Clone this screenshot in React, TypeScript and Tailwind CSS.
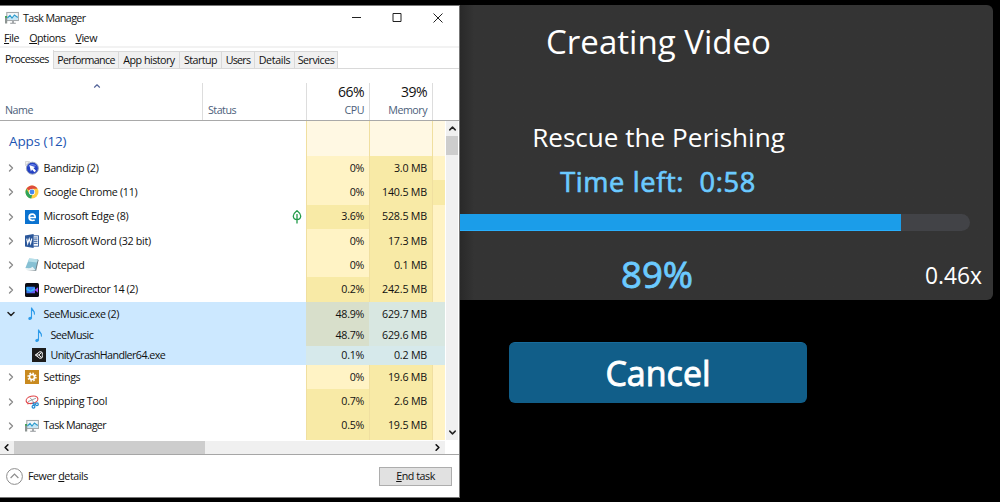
import React from 'react';
import clsx from 'clsx';
import { ChevronDown, ChevronLeft, ChevronRight, ChevronUp } from 'lucide-react';

type Heat = 'low' | 'high' | 'selStrong' | 'selMem' | 'selWeak';

interface Process {
  name: string;
  icon: React.FC;
  cpu: string;
  memory: string;
  cpuHeat: Heat;
  memHeat: Heat;
  restHeat: Heat;
  tracking: string;
  kind?: 'parent' | 'child';
  leaf?: boolean;
}

const heatClass: Record<Heat, string> = {
  low: 'bg-[#fff3c5]',
  high: 'bg-[#f8eaa6]',
  selStrong: 'bg-[#d8dfcb]',
  selMem: 'bg-[#d8e7e1]',
  selWeak: 'bg-[#d6e9eb]',
};

const TaskManagerIcon: React.FC = () => (
  <svg viewBox="0 0 14 14" className="w-3.5 h-3.5 shrink-0">
    <rect x="1.8" y="1.5" width="11.6" height="8" fill="#f4f8fa" stroke="#a3a8ab" strokeWidth="1.1" />
    <path d="M2.4 7.2 5 4.8l2 2.6 2.6-2.9 3.2 2.3V9H2.4z" fill="#c6e6f5" />
    <path d="M2.4 7 5 4.4l2 2.6L9.4 4l3.4 2.6" fill="none" stroke="#2e9ccd" strokeWidth="1.2" />
    <path d="M7.2 10h1.6v1.8h2v1H5.2v-1h2z" fill="#92979a" />
    <rect x="0" y="5" width="2.2" height="7.5" fill="#8d9492" />
    <rect x="0.3" y="5" width="1.5" height="1.8" fill="#2fab46" />
  </svg>
);

const BandizipIcon: React.FC = () => (
  <svg viewBox="0 0 14 14" className="w-3.5 h-3.5 shrink-0">
    <path d="M.5.5h4l-4 4z" fill="#eee" stroke="#bbb" strokeWidth=".5" />
    <circle cx="7.4" cy="7.2" r="6" fill="#2340c4" stroke="#9aa6bd" strokeWidth="1" />
    <path d="M3 5.6a5 5 0 0 1 8.8 0Q7.4 3.4 3 5.6z" fill="#6d86ea" />
    <path d="m4.4 4.2 6 1.8-2 1.1 2.6 2.7-1.5 1.4L7 8.5 5.9 10.4z" fill="#fff" />
  </svg>
);

const ChromeIcon: React.FC = () => (
  <svg viewBox="0 0 14 14" className="w-3.5 h-3.5 shrink-0">
    <circle cx="7" cy="7" r="6.5" fill="#ffcd40" />
    <path d="M7 7 1.4 3.7A6.5 6.5 0 0 1 12.6 3.8H7z" fill="#dd4b3e" />
    <path d="M1.4 3.7 4.2 8.6l2.8 1.6-.7 3.3A6.5 6.5 0 0 1 1.4 3.7z" fill="#2fa35a" />
    <circle cx="7" cy="7" r="3.1" fill="#fff" />
    <circle cx="7" cy="7" r="2.4" fill="#4587f0" />
  </svg>
);

const EdgeIcon: React.FC = () => (
  <svg viewBox="0 0 14 14" className="w-3.5 h-3.5 shrink-0">
    <rect width="14" height="14" fill="#0b73d0" />
    <path
      d="M4.7 7.5h5.5c.1-2.2-1.1-3.4-2.9-3.4C5.2 4.1 4.1 5.6 4.1 7.3c0 2 1.3 3.2 3.3 3.2.9 0 1.7-.2 2.3-.6"
      fill="none"
      stroke="#fff"
      strokeWidth="1.7"
    />
  </svg>
);

const WordIcon: React.FC = () => (
  <svg viewBox="0 0 14 14" className="w-3.5 h-3.5 shrink-0">
    <rect x="6" y="1.8" width="7.5" height="10.4" fill="#fff" stroke="#2b579a" strokeWidth=".9" />
    <path d="M8.5 4h4M8.5 5.8h4M8.5 7.6h4M8.5 9.4h4" stroke="#2b579a" strokeWidth=".9" />
    <path d="M0 1.6 8.6 0v14L0 12.4z" fill="#2b579a" />
    <path d="m1.7 4.7 1 4.8 1.5-4.6 1.4 4.6 1.2-5" fill="none" stroke="#fff" strokeWidth="1.1" />
  </svg>
);

const NotepadIcon: React.FC = () => (
  <svg viewBox="0 0 14 14" className="w-3.5 h-3.5 shrink-0">
    <path d="M12.2 1 13.6 2 11.2 12.8 2 12z" fill="#6b7b82" />
    <path d="M4.2.6 12.8 1.2 10.4 12 .4 10z" fill="#86c0d3" />
    <path d="M4.2.6 12.8 1.2l-.8 3.4-8.9-1z" fill="#b7dfe9" />
    <path d="M.4 10Q5 11 7.600 8.800L10.400 12 2 12.200z" fill="#e7f2f5" />
  </svg>
);

const PowerDirectorIcon: React.FC = () => (
  <svg viewBox="0 0 14 14" className="w-3.5 h-3.5 shrink-0">
    <defs>
      <linearGradient id="pd" x1="0" x2="1" y1="0" y2="1">
        <stop offset="0" stopColor="#26a3f5" />
        <stop offset=".6" stopColor="#3f6df0" />
        <stop offset="1" stopColor="#7d4ff0" />
      </linearGradient>
    </defs>
    <rect width="14" height="14" rx="1.6" fill="#0c0c14" />
    <rect x="1.4" y="3.7" width="8.6" height="6.6" rx=".6" fill="url(#pd)" />
    <path d="m1.400 4.500 4 3 4.600-3V7L5.600 9 1.400 7z" fill="#3fd3f3" opacity=".7" />
    <path d="m9.700 7 3.300-2.800v5.600z" fill="#a04cf0" />
  </svg>
);

const NoteIcon: React.FC = () => (
  <svg viewBox="0 0 14 14" className="w-3.5 h-3.5 shrink-0">
    <ellipse cx="5.1" cy="11.3" rx="1.9" ry="1.5" fill="#2c9bea" transform="rotate(-20 5.1 11.3)" />
    <path d="M6.5 11.2V.6c.3 2.3 3.8 3.1 3 7" fill="none" stroke="#2c9bea" strokeWidth="1.1" />
    <path d="M6.6 1.6c.8 1.4 2.9 2.4 3 4.4C9 4.6 7.5 4 6.6 3.8z" fill="#2c9bea" />
  </svg>
);

const UnityIcon: React.FC = () => (
  <svg viewBox="0 0 14 14" className="w-3.5 h-3.5 shrink-0">
    <rect width="14" height="14" fill="#1c1c1c" />
    <path
      d="M3.4 7 7.8 3.7 10 4.2l.5 2.2-.7.6.7.6-.5 2.2-2.2.5zM3.4 7h3.4M6.8 7 9.4 4.6M6.8 7l2.6 2.4"
      fill="none"
      stroke="#fff"
      strokeWidth="1"
    />
  </svg>
);

const SettingsIcon: React.FC = () => (
  <svg viewBox="0 0 14 14" className="w-3.5 h-3.5 shrink-0">
    <rect width="14" height="14" fill="#c98a1f" />
    <circle cx="7" cy="7" r="3.9" fill="none" stroke="#fff" strokeWidth="1.5" strokeDasharray="1.55 1.51" />
    <circle cx="7" cy="7" r="2.5" fill="none" stroke="#fff" strokeWidth="1.6" />
  </svg>
);

const SnippingIcon: React.FC = () => (
  <svg viewBox="0 0 14 14" className="w-3.5 h-3.5 shrink-0">
    <ellipse cx="7" cy="4.8" rx="6" ry="3.6" fill="#fff" stroke="#e0474a" strokeWidth="1.1" transform="rotate(-14 7 4.8)" />
    <path d="m3 6.6 8-3.4M5 2.6l4.6 6" stroke="#9aa3a8" strokeWidth="1" />
    <path d="m2.2 8.8 6.4-.8" stroke="#e0474a" strokeWidth="1" />
    <circle cx="8.5" cy="11.8" r="1.4" fill="none" stroke="#2189d0" strokeWidth="1.2" />
    <circle cx="11.9" cy="9.2" r="1.4" fill="none" stroke="#2189d0" strokeWidth="1.2" />
    <path d="M9 10.6 8.6 7.4M10.6 9.2 7.4 8.6" stroke="#2189d0" strokeWidth="1.1" />
  </svg>
);

const LeafIcon: React.FC = () => (
  <svg viewBox="0 0 10 14" className="w-2.5 h-3.5">
    <path
      d="M5 .8C6.4 2 8.9 3.1 8.7 6.2 8.5 8.4 6.9 9.5 5 9.5S1.5 8.4 1.3 6.2C1.1 3.1 3.6 2 5 .8zM5 4v9.6"
      fill="none"
      stroke="#239b4a"
      strokeWidth="1.3"
    />
  </svg>
);

const processes: Process[] = [
  { name: 'Bandizip (2)', icon: BandizipIcon, cpu: '0%', memory: '3.0 MB', cpuHeat: 'low', memHeat: 'high', restHeat: 'low', tracking: 'tracking-[-0.25px]' },
  { name: 'Google Chrome (11)', icon: ChromeIcon, cpu: '0%', memory: '140.5 MB', cpuHeat: 'low', memHeat: 'high', restHeat: 'high', tracking: 'tracking-[-0.3px]' },
  { name: 'Microsoft Edge (8)', icon: EdgeIcon, cpu: '3.6%', memory: '528.5 MB', cpuHeat: 'high', memHeat: 'high', restHeat: 'low', leaf: true, tracking: 'tracking-[-0.25px]' },
  { name: 'Microsoft Word (32 bit)', icon: WordIcon, cpu: '0%', memory: '17.3 MB', cpuHeat: 'low', memHeat: 'high', restHeat: 'low', tracking: 'tracking-[-0.3px]' },
  { name: 'Notepad', icon: NotepadIcon, cpu: '0%', memory: '0.1 MB', cpuHeat: 'low', memHeat: 'high', restHeat: 'low', tracking: 'tracking-[-0.35px]' },
  { name: 'PowerDirector 14 (2)', icon: PowerDirectorIcon, cpu: '0.2%', memory: '242.5 MB', cpuHeat: 'high', memHeat: 'high', restHeat: 'low', tracking: 'tracking-[-0.4px]' },
  { name: 'SeeMusic.exe (2)', icon: NoteIcon, cpu: '48.9%', memory: '629.7 MB', cpuHeat: 'selStrong', memHeat: 'selMem', restHeat: 'selMem', kind: 'parent', tracking: 'tracking-[-0.45px]' },
  { name: 'SeeMusic', icon: NoteIcon, cpu: '48.7%', memory: '629.6 MB', cpuHeat: 'selStrong', memHeat: 'selMem', restHeat: 'selMem', kind: 'child', tracking: 'tracking-[-0.5px]' },
  { name: 'UnityCrashHandler64.exe', icon: UnityIcon, cpu: '0.1%', memory: '0.2 MB', cpuHeat: 'selWeak', memHeat: 'selWeak', restHeat: 'selWeak', kind: 'child', tracking: 'tracking-[-0.56px]' },
  { name: 'Settings', icon: SettingsIcon, cpu: '0%', memory: '19.6 MB', cpuHeat: 'low', memHeat: 'high', restHeat: 'low', tracking: 'tracking-[-0.35px]' },
  { name: 'Snipping Tool', icon: SnippingIcon, cpu: '0.7%', memory: '2.6 MB', cpuHeat: 'high', memHeat: 'high', restHeat: 'low', tracking: 'tracking-[-0.3px]' },
  { name: 'Task Manager', icon: TaskManagerIcon, cpu: '0.5%', memory: '19.5 MB', cpuHeat: 'high', memHeat: 'high', restHeat: 'low', tracking: 'tracking-[-0.58px]' },
];

const tabs = [
  { label: 'Performance', className: 'w-[65px] tracking-[-0.65px]' },
  { label: 'App history', className: 'w-[61px] tracking-[-0.5px]' },
  { label: 'Startup', className: 'w-[42px] tracking-[-0.55px]' },
  { label: 'Users', className: 'w-[33px] tracking-[-0.75px]' },
  { label: 'Details', className: 'w-[40px] tracking-[-0.35px]' },
  { label: 'Services', className: 'w-[43px] tracking-[-0.5px]' },
];

const ProcessRow: React.FC<{ process: Process }> = ({ process }) => {
  const Icon = process.icon;
  const selected = process.kind !== undefined;
  return (
    <div className={clsx('flex shrink-0', process.kind === 'child' ? 'h-[19.5px]' : 'h-[24.3px]', selected && 'bg-[#cce8ff]')}>
      <div className={clsx('flex w-[306px] items-center', process.kind === 'child' ? 'pl-8' : 'pl-1.5')}>
        {process.kind !== 'child' && (
          <span className="mr-[10px] w-[9px]">
            {process.kind === 'parent' ? (
              <ChevronDown className="-ml-px h-[12px] w-[12px] text-[#222]" strokeWidth={3} />
            ) : (
              <ChevronRight className="-ml-px h-[12px] w-[12px] text-[#8b8b8b]" strokeWidth={2.7} />
            )}
          </span>
        )}
        <Icon />
        <span className={clsx('ml-[4.5px]', process.tracking)}>{process.name}</span>
        {process.leaf && (
          <span className="mr-1 ml-auto">
            <LeafIcon />
          </span>
        )}
      </div>
      <div className={clsx('flex w-[63px] items-center justify-end border-l pr-[5px] tracking-[-0.3px]', selected ? 'border-transparent' : 'border-[#f0dfa0]', heatClass[process.cpuHeat])}>
        {process.cpu}
      </div>
      <div className={clsx('flex w-[63px] items-center justify-end border-l pr-[5px] tracking-[-0.2px]', selected ? 'border-transparent' : 'border-[#f0dfa0]', heatClass[process.memHeat])}>
        {process.memory}
      </div>
      <div className={clsx('w-[13px] border-l', selected ? 'border-transparent' : 'border-[#f0dfa0]', heatClass[process.restHeat])} />
    </div>
  );
};

const TaskManager: React.FC = () => (
  <section className="flex h-[493px] w-[460px] shrink-0 flex-col border-t border-r border-b border-[#777] bg-white text-[10.7px] leading-none text-[#111]">
    <div className="flex h-[23px] items-center pt-px pl-[5px]">
      <TaskManagerIcon />
      <span className="ml-1 tracking-[-0.58px]">Task Manager</span>
      <svg viewBox="0 0 92 10" className="mr-[16px] ml-auto h-[10px] w-[92px]" fill="none" stroke="#222" strokeWidth="1">
        <path d="M1 4.5h9M42 .5h8v8h-8zM82.5.5l9 9M91.5.5l-9 9" />
      </svg>
    </div>
    <div className="flex h-[19px] items-center gap-[10px] border-b-2 border-[#f2f2f2] pt-0.5 pl-1 tracking-[-0.45px]">
      <span><u>F</u>ile</span>
      <span><u>O</u>ptions</span>
      <span><u>V</u>iew</span>
    </div>
    <div className="flex h-[21px] items-end border-b border-[#d9d9d9]">
      <div className="-mb-px flex h-[19px] w-[54px] items-center border-r border-[#d9d9d9] bg-white pl-[5px] tracking-[-0.65px]">Processes</div>
      {tabs.map(tab => (
        <div key={tab.label} className={clsx('flex h-[17px] items-center justify-center border-t border-r border-[#d9d9d9] bg-[#f0f0f0] pt-px', tab.className)}>
          {tab.label}
        </div>
      ))}
    </div>
    <div className="flex h-[52px] border-b border-[#a9a9a9] pt-3.5 tracking-[-0.5px] text-[#4c607a]">
      <div className="flex w-[203px] flex-col justify-between border-r border-[#ddd] pb-1 pl-[5px]">
        <ChevronUp className="ml-[87px] -mt-0.5 h-2.5 w-2.5 text-[#55669a]" strokeWidth={2.8} />
        <span>Name</span>
      </div>
      <div className="flex w-[104px] items-end border-r border-[#ddd] pb-1 pl-[5px]">Status</div>
      <div className="flex w-[63px] flex-col items-end justify-between border-r border-[#ddd] pt-[2px] pr-[5px] pb-1">
        <span className="text-[14px] text-[#111]">66%</span>
        <span>CPU</span>
      </div>
      <div className="flex w-[63px] flex-col items-end justify-between border-r border-[#ddd] pt-[2px] pr-[5px] pb-1">
        <span className="text-[14px] text-[#111]">39%</span>
        <span>Memory</span>
      </div>
    </div>
    <div className="flex h-[319px]">
      <div className="flex w-[445px] flex-col overflow-hidden">
        <div className="flex h-[35px] shrink-0">
          <div className="flex w-[306px] items-center pt-1.5 pl-[9px] text-[13.5px] tracking-[-0.1px] text-[#1c54b2]">Apps (12)</div>
          <div className="w-[63px] border-l border-[#f0dfa0] bg-[#fff8e3]" />
          <div className="w-[63px] border-l border-[#f0dfa0] bg-[#fff8e3]" />
          <div className="w-[13px] border-l border-[#f0dfa0] bg-[#fff8e3]" />
        </div>
        {processes.map(process => (
          <ProcessRow key={process.name} process={process} />
        ))}
        <div className="flex flex-1">
          <div className="w-[306px]" />
          <div className="w-[63px] border-l border-[#f0dfa0] bg-[#f8eaa6]" />
          <div className="w-[63px] border-l border-[#f0dfa0] bg-[#f8eaa6]" />
          <div className="w-[13px] border-l border-[#f0dfa0] bg-[#fff3c5]" />
        </div>
      </div>
      <div className="ml-px flex w-[12px] flex-col items-center bg-[#f0f0f0]">
        <ChevronUp className="my-0.5 h-[11px] w-[11px] text-[#222]" strokeWidth={3.2} />
        <div className="h-[19px] w-full bg-[#cdcdcd]" />
        <ChevronDown className="mt-auto mb-0.5 h-[11px] w-[11px] text-[#222]" strokeWidth={3.2} />
      </div>
    </div>
    <div className="flex h-[15px] border-b border-[#a6a6a6] pt-px">
      <div className="flex w-[445px] items-center bg-[#f0f0f0]">
        <ChevronLeft className="mr-0.5 ml-px h-[11px] w-[11px] text-[#111]" strokeWidth={3.5} />
        <div className="h-full w-[191px] bg-[#cdcdcd]" />
        <ChevronRight className="mr-0.5 ml-auto h-[11px] w-[11px] text-[#111]" strokeWidth={3.5} />
      </div>
    </div>
    <div className="flex flex-1 items-center pl-[6px] tracking-[-0.45px]">
      <svg viewBox="0 0 17 17" className="h-[17px] w-[17px]" fill="none" stroke="#8d8d8d">
        <circle cx="8.5" cy="8.5" r="7.9" />
        <path d="m4.6 10 3.9-3.9 3.9 3.9" strokeWidth="1.2" />
      </svg>
      <span className="ml-[5px]">Fewer <u>d</u>etails</span>
      <button className="mr-[7px] ml-auto h-[19px] w-[73px] border border-[#adadad] bg-[#e1e1e1] leading-none tracking-[-0.45px]"><u>E</u>nd task</button>
    </div>
  </section>
);

const VideoProgress: React.FC = () => (
  <section className="flex w-[533px] flex-col text-white">
    <div className="flex h-[295px] flex-col rounded-r-md bg-[#343434] bg-linear-to-r from-[#292929] from-0% to-[#343434] to-[14px] leading-none">
      <h1 className="mt-[20px] ml-[-136px] text-center text-[33.1px] leading-[34px]">Creating Video</h1>
      <p className="mt-[65px] ml-[-136px] text-center text-[26.1px] leading-[27px]">Rescue the Perishing</p>
      <p className="mt-[17px] ml-[-137px] text-center text-[27.2px] leading-[27px] tracking-[0.65px] whitespace-pre text-[#6bcaff] [-webkit-text-stroke:0.7px_#6bcaff]">Time left:  0:58</p>
      <div className="mt-[19px] mr-[23px] h-[17px] overflow-hidden rounded-r-full bg-[#424347]">
        <div className="h-full w-[441px] border-b border-[#28b0ff] bg-[#1b9de9]" />
      </div>
      <div className="mt-[24px] flex items-center">
        <span className="ml-[161px] text-[36.6px] leading-[38px] text-[#6bcaff] [-webkit-text-stroke:0.8px_#6bcaff]">89%</span>
        <span className="mt-1 mr-[11px] ml-auto text-[22.8px]">0.46x</span>
      </div>
    </div>
    <button className="mt-[42px] ml-[49px] h-[61px] w-[298px] rounded-md border-t border-[#176b9b] bg-[#115e89] text-[34px] leading-none [-webkit-text-stroke:0.9px_white]">
      Cancel
    </button>
  </section>
);

export default function App() {
  return (
    <main className="flex h-[502px] w-[1000px] overflow-hidden bg-black pt-[5px] font-['Open_Sans',sans-serif]">
      <TaskManager />
      <VideoProgress />
    </main>
  );
}
